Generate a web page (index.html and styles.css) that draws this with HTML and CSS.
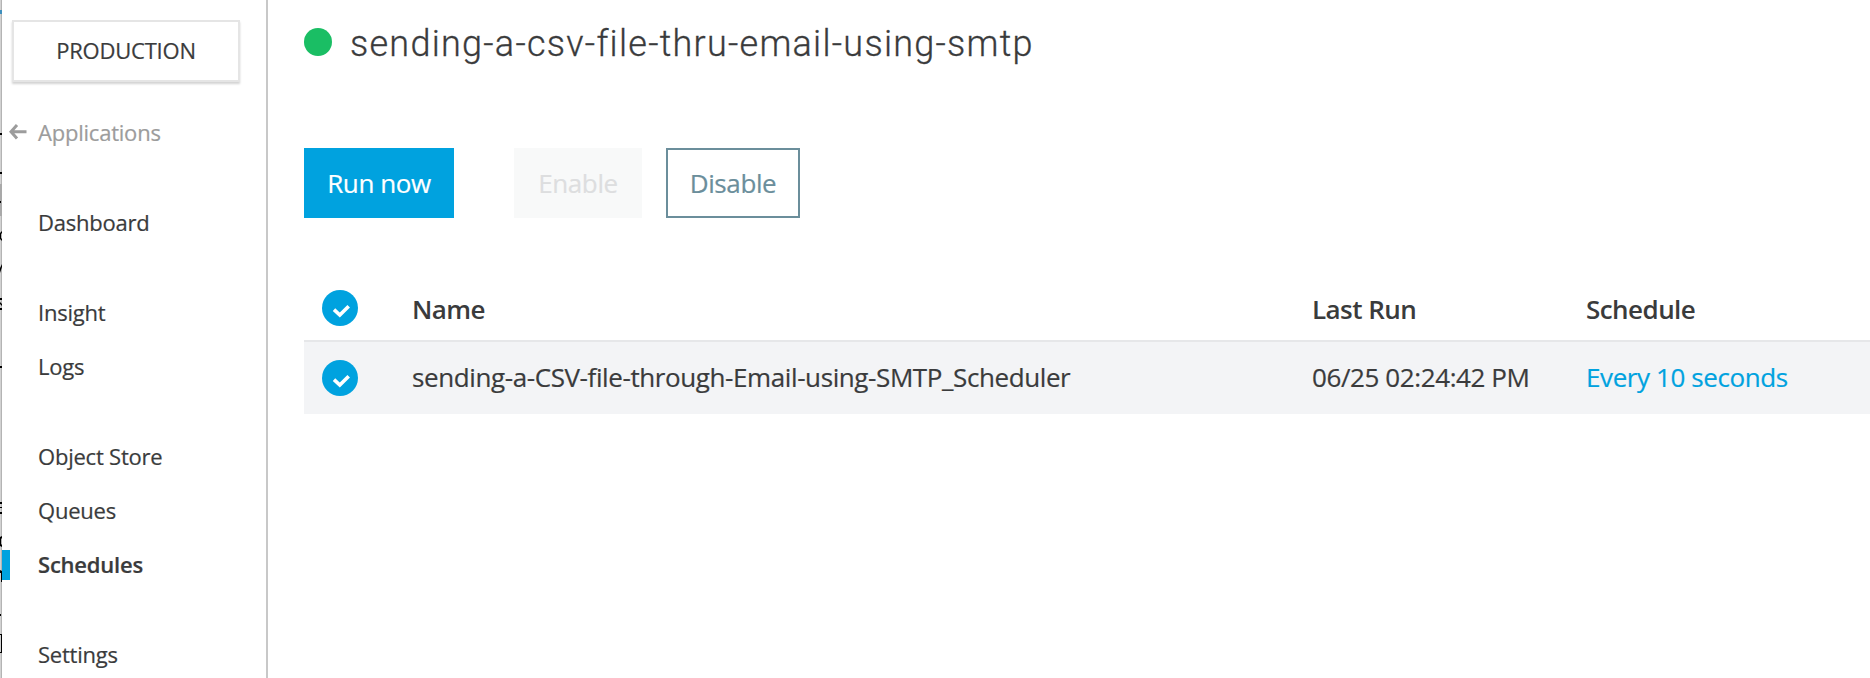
FILE: index.html
```html
<!DOCTYPE html>
<html lang="en">
<head>
<meta charset="utf-8">
<title>Schedules</title>
<link rel="stylesheet" href="styles.css">
</head>
<body>
<div class="app">
  <svg class="edge" width="2" height="678" viewBox="0 0 2 678">
    <rect width="2" height="678" fill="#d2d2d2"/>
    <rect x="1" width="1" height="678" fill="#b4b4b4"/>
    <path fill="#3f8fbd" d="M0 10h2v4H0z"/>
    <path fill="#a9a9a9" d="M0 184h2v32H0z"/>
    <path fill="#000" d="M0 133h2v2H0zM0 172h2v2H0zM0 201h1v2H0zM0 233l2-2v2l-1 1v4l1 1v2l-2-2zM0 268l2-4v3l-2 6zM0 298h2v2H0zM0 302l2 2v2l-2-2zM0 308h2v2H0zM0 366h2v2H0zM0 502h2v2H0zM0 507h2v1H0zM0 512h2v2H0zM0 537l2-1v2l-1 1v5l1 1v2l-2-1zM0 570l2 1v11H1v-9H0zM0 614h1v2H0zM0 634h2v1H0zM1 635h1v17H1zM0 652h2v1H0z"/>
  </svg>
  <aside class="sidebar">
    <button class="env">PRODUCTION</button>
    <nav class="nav">
      <a class="item back"><svg class="arrow" width="18" height="16" viewBox="0 0 18 16"><path d="M8 1L2 7.7L8 14.4M2 7.7H17.5" fill="none" stroke="#9c9c9c" stroke-width="3"/></svg>Applications</a>
      <a class="item gap">Dashboard</a>
      <a class="item gap">Insight</a>
      <a class="item">Logs</a>
      <a class="item gap">Object Store</a>
      <a class="item">Queues</a>
      <a class="item active">Schedules</a>
      <a class="item gap">Settings</a>
    </nav>
  </aside>
  <main class="main">
    <header class="heading"><span class="status"></span><h1 class="title">sending-a-csv-file-thru-email-using-smtp</h1></header>
    <div class="actions">
      <button class="btn run">Run now</button>
      <button class="btn enable" disabled>Enable</button>
      <button class="btn disable">Disable</button>
    </div>
    <div class="table">
      <div class="row head">
        <svg class="check" width="36" height="36" viewBox="0 0 36 36"><circle cx="18" cy="18" r="18" fill="#00a2df"/><path d="M12 19.6L17.8 25L26.7 16.2" fill="none" stroke="#fff" stroke-width="3.6"/></svg>
        <span>Name</span><span>Last Run</span><span>Schedule</span>
      </div>
      <div class="row body">
        <svg class="check" width="36" height="36" viewBox="0 0 36 36"><circle cx="18" cy="18" r="18" fill="#00a2df"/><path d="M12 19.6L17.8 25L26.7 16.2" fill="none" stroke="#fff" stroke-width="3.6"/></svg>
        <span class="name">sending-a-CSV-file-through-Email-using-SMTP_Scheduler</span><span>06/25 02:24:42 PM</span><a class="link">Every 10 seconds</a>
      </div>
    </div>
  </main>
</div>
</body>
</html>
```
FILE: styles.css
```css
* { box-sizing: border-box; }
body { margin: 0; background: #fff; color: #3a3b3c; font-family: "Open Sans", "Noto Sans", sans-serif; overflow: hidden; }
button { font: inherit; color: inherit; letter-spacing: inherit; margin: 0; padding: 0; background: none; border: 0; }
.app { display: flex; height: 678px; }
.edge { flex: none; }
.sidebar { flex: none; width: 266px; border-right: 2px solid #c8c8c8; padding: 20px 0 0; font-size: 22px; letter-spacing: -0.22px; -webkit-text-stroke: 0.2px; }
.env { display: block; width: 228px; height: 62px; margin-left: 10px; padding-bottom: 2px; border: 2px solid #e5e5e5; box-shadow: 0 2px 2px #d4d4d4; }
.nav { display: flex; flex-direction: column; margin-top: 23px; }
.item { display: flex; align-items: center; height: 54px; padding-left: 36px; white-space: nowrap; }
.gap { margin-top: 36px; }
.back { color: #9c9c9c; padding-left: 7px; }
.arrow { margin-right: 11px; flex: none; }
.active { font-weight: 600; background: linear-gradient(#00a2df, #00a2df) 0 13px / 8px 30px no-repeat; }
.main { flex: 1; min-width: 0; padding: 20px 0 0 36px; }
.heading { display: flex; align-items: center; height: 48px; }
.status { width: 28px; height: 28px; margin: -4px 18px 0 0; border-radius: 50%; background: #1abe64; }
.title { margin: 0; font: 300 36px/48px Roboto, sans-serif; letter-spacing: 1.25px; white-space: nowrap; -webkit-text-stroke: 0.3px; }
.actions { display: flex; margin-top: 80px; font-size: 26px; letter-spacing: -0.4px; -webkit-text-stroke: 0.2px; }
.btn { height: 70px; }
.run { width: 150px; background: #00a2df; color: #fff; }
.enable { width: 128px; margin-left: 60px; background: #f8f9f9; color: #dddedf; }
.disable { width: 134px; margin-left: 24px; border: 2px solid #6b8e9b; color: #6b8e9b; }
.table { margin-top: 60px; font-size: 26px; letter-spacing: -0.4px; }
.row { display: grid; grid-template-columns: 90px 900px 274px 1fr; align-items: center; padding-left: 18px; white-space: nowrap; }
.row .check { display: block; }
.head { height: 64px; border-bottom: 2px solid #e6e7e9; font-weight: 600; letter-spacing: -0.55px; }
.head .check { margin-bottom: 2px; }
.body { height: 72px; background: #f3f4f6; -webkit-text-stroke: 0.2px; }
.body span, .body .link { padding-bottom: 2px; }
.link { color: #00a2df; }
```
